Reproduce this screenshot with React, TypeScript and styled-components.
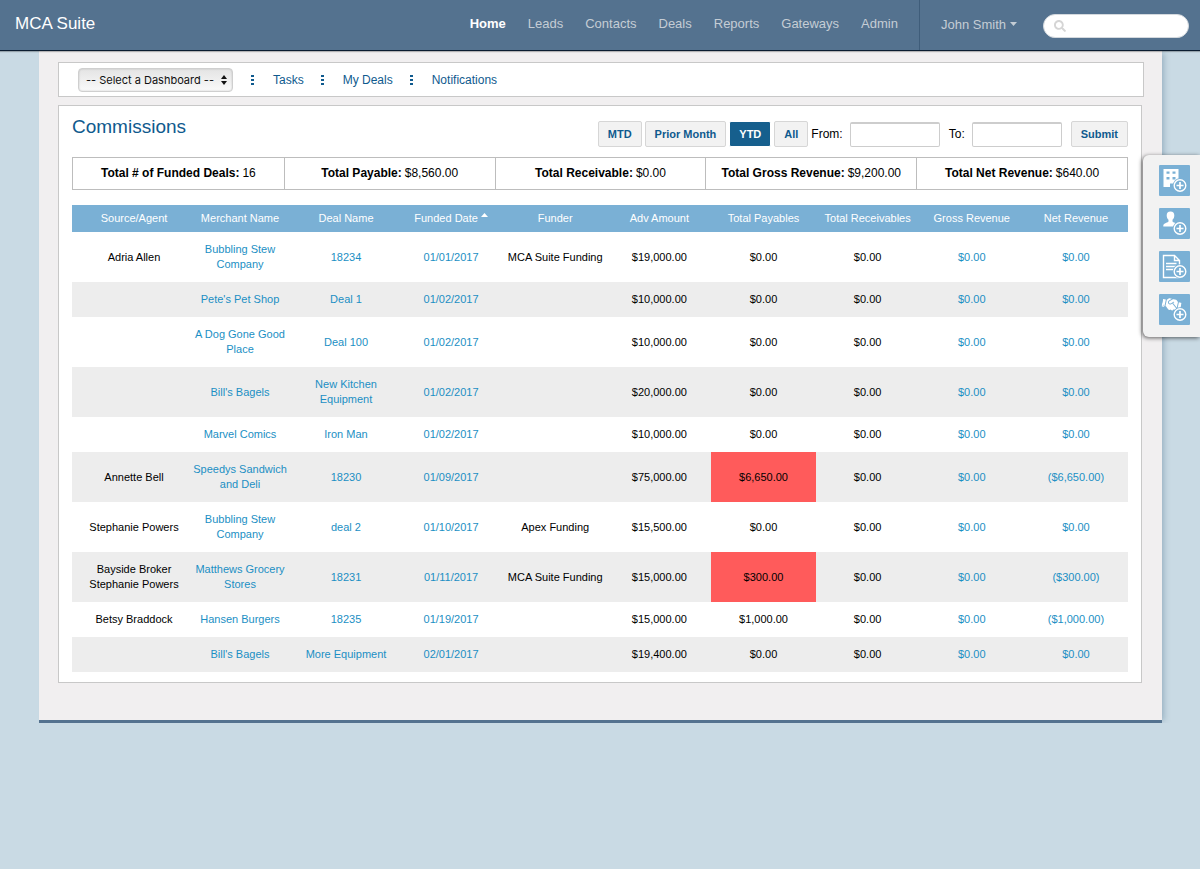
import React from "react";
import styled, { createGlobalStyle } from "styled-components";
import { FaHandshake, FaSearch } from "react-icons/fa";

const color = {
  bar: "#54728f",
  page: "#c9dae4",
  sheet: "#f1eff0",
  line: "#c8c8c8",
  heading: "#0f5a8e",
  link: "#1b8fc4",
  head: "#7ab0d5",
  stripe: "#ededed",
  alert: "#ff5b5b",
};

const GlobalStyle = createGlobalStyle`
  * { box-sizing: border-box; }
  body {
    margin: 0;
    background: ${color.page};
    color: #000;
    font-family: "Liberation Sans", Arial, sans-serif;
    font-size: 12px;
  }
  a { text-decoration: none; }
  button, input, select { font-family: inherit; }
`;

const TopBar = styled.header`
  position: relative;
  display: flex;
  justify-content: space-between;
  height: 51px;
  background: ${color.bar};
  border-bottom: 1px solid #0b1d30;
  box-shadow: 0 1px 1px rgba(0, 0, 0, 0.25);
`;

const Brand = styled.a`
  padding: 14px 15px;
  color: #fff;
  font-size: 17px;
  line-height: 20px;
`;

const BarRight = styled.div`
  display: flex;
`;

const MainNav = styled.nav`
  display: flex;
  gap: 22px;
  padding: 14px 21px;
  border-right: 1px solid #3f5d7a;
`;

const NavLink = styled.a<{ $current?: boolean }>`
  color: ${(p) => (p.$current ? "#fff" : "#c5cdd5")};
  font-size: 13px;
  font-weight: ${(p) => (p.$current ? "bold" : "normal")};
  line-height: 20px;
`;

const UserButton = styled.button`
  display: flex;
  align-items: center;
  gap: 4px;
  height: 20px;
  margin: 14px 26px 0 21px;
  padding: 0;
  border: 0;
  background: none;
  color: #c5cdd5;
  font-size: 13px;
`;

const SearchBox = styled.label`
  display: flex;
  align-items: center;
  width: 146px;
  height: 24px;
  margin: 14px 11px 0 0;
  padding: 0 10px;
  gap: 4px;
  border: 1px solid #d4d9de;
  border-radius: 12px;
  background: #fff;
  color: #d5d5d5;
`;

const SearchInput = styled.input`
  flex: 1;
  min-width: 0;
  border: 0;
  outline: 0;
  background: none;
  font-size: 12px;
`;

const Sheet = styled.main`
  margin: 0 38px 0 39px;
  padding: 11px 18px 37px 19px;
  background: ${color.sheet};
  border-bottom: 3px solid ${color.bar};
  box-shadow: 4px 0 6px -2px rgba(60, 100, 130, 0.35);
`;

const Toolbar = styled.nav`
  display: flex;
  align-items: center;
  height: 35px;
  margin-bottom: 8px;
  padding-left: 19px;
  border: 1px solid ${color.line};
  background: #fff;
`;

const SelectWrap = styled.div`
  position: relative;
  width: 155px;
  margin-right: 18px;
  svg {
    position: absolute;
    right: 6px;
    top: 7px;
    pointer-events: none;
  }
`;

const DashboardSelect = styled.select`
  appearance: none;
  display: block;
  width: 100%;
  height: 24px;
  padding: 0 7px;
  border: 1px solid #cfcfcf;
  border-radius: 4px;
  background: linear-gradient(#e4e4e4, #fafafa);
  box-shadow: inset 0 0 2px rgba(0, 0, 0, 0.2);
  color: #111;
  font-family: Inter, sans-serif;
  font-size: 11px;
`;

const ToolLink = styled.a`
  margin: 0 17px 0 18px;
  color: ${color.heading};
  line-height: 16px;
`;

const Card = styled.section`
  margin-right: 2px;
  padding: 15px 13px 10px;
  border: 1px solid ${color.line};
  background: #fff;
`;

const CardHead = styled.div`
  display: flex;
  justify-content: space-between;
  margin-bottom: 10px;
`;

const Title = styled.h1`
  margin: 0;
  color: ${color.heading};
  font-size: 19px;
  font-weight: normal;
  line-height: 12px;
`;

const Filters = styled.form`
  display: flex;
  align-items: center;
  gap: 3px;
`;

const FilterButton = styled.button<{ $active?: boolean }>`
  height: 26px;
  padding: 0 9px;
  border: 1px solid ${(p) => (p.$active ? "#fff" : "#d6d6d6")};
  border-radius: 2px;
  background: ${(p) => (p.$active ? "#165f8d" : "#f2f2f2")};
  color: ${(p) => (p.$active ? "#fff" : color.heading)};
  font-size: 11px;
  font-weight: bold;
`;

const DateField = styled.label`
  display: flex;
  align-items: center;
  gap: 7px;
  margin-right: 6px;
`;

const DateInput = styled.input`
  width: 90px;
  height: 25px;
  border: 1px solid #cdcdcd;
  border-top: 2px solid #cdcdcd;
  border-radius: 2px;
  background: #fff;
  font-size: 12px;
`;

const Totals = styled.dl`
  display: grid;
  grid-template-columns: repeat(5, 1fr);
  margin: 0 0 15px;
  border: 1px solid #bdbdbd;
`;

const Total = styled.div`
  display: flex;
  justify-content: center;
  gap: 3px;
  padding: 8px 0;
  line-height: 15px;
  & + & {
    border-left: 1px solid #bdbdbd;
  }
  dt {
    font-weight: bold;
  }
  dd {
    margin: 0;
  }
`;

const Grid = styled.table`
  width: 100%;
  table-layout: fixed;
  border-collapse: collapse;
  font-size: 11px;
  line-height: 15px;
  text-align: center;
`;

const Col = styled.col<{ $width?: number }>`
  width: ${(p) => (p.$width ? `${p.$width}px` : "auto")};
`;

const HeadCell = styled.th`
  padding: 6px 2px;
  background: ${color.head};
  color: #fff;
  font-weight: normal;
  white-space: nowrap;
  &:first-child {
    padding-left: 11px;
  }
  svg {
    margin-left: 3px;
    vertical-align: 5px;
  }
`;

const Row = styled.tr`
  &:nth-child(even) {
    background: ${color.stripe};
  }
`;

const Cell = styled.td<{ $alert?: boolean }>`
  padding: 10px 3px;
  background: ${(p) => (p.$alert ? color.alert : "transparent")};
  white-space: pre-line;
  &:first-child {
    padding-left: 12px;
  }
  a {
    color: ${color.link};
  }
`;

const QuickPanel = styled.aside`
  position: fixed;
  right: 0;
  top: 155px;
  display: grid;
  gap: 12px;
  padding: 10px 10px 12px 16px;
  border-radius: 6px 0 0 6px;
  background: #f2f2f2;
  box-shadow: -1px 1px 4px rgba(0, 0, 0, 0.6);
`;

const QuickButton = styled.button`
  display: block;
  width: 31px;
  height: 31px;
  padding: 0;
  border: 0;
  border-radius: 1px;
  background: ${color.head};
  color: #fff;
  svg {
    display: block;
  }
`;

const QuickIcon = ({ children }: { children: React.ReactNode }) => (
  <svg width="31" height="31" viewBox="0 0 31 31" fill="#fff" aria-hidden="true">
    {children}
    <circle cx="21" cy="20.5" r="7.2" fill={color.head} />
    <circle cx="21" cy="20.5" r="5.8" fill="none" stroke="#fff" strokeWidth="1.4" />
    <path d="M21 17v7M17.500 20.500h7" stroke="#fff" strokeWidth="1.700" fill="none" />
  </svg>
);

const Dots = () => (
  <svg width="4" height="10" viewBox="0 0 4 10" fill={color.heading} aria-hidden="true">
    <path d="M0 0h3v2H0zM0 4h3v2H0zM0 8h3v2H0z" />
  </svg>
);

const navItems = ["Home", "Leads", "Contacts", "Deals", "Reports", "Gateways", "Admin"];
const toolItems = ["Tasks", "My Deals", "Notifications"];

const totals = [
  ["Total # of Funded Deals:", "16"],
  ["Total Payable:", "$8,560.00"],
  ["Total Receivable:", "$0.00"],
  ["Total Gross Revenue:", "$9,200.00"],
  ["Total Net Revenue:", "$640.00"],
];

const columns = [
  "Source/Agent",
  "Merchant Name",
  "Deal Name",
  "Funded Date",
  "Funder",
  "Adv Amount",
  "Total Payables",
  "Total Receivables",
  "Gross Revenue",
  "Net Revenue",
];

interface Deal {
  agent: string;
  merchant: string;
  name: string;
  date: string;
  funder: string;
  amount: string;
  payable: string;
  net: string;
  alert?: boolean;
}

const deal = (
  agent: string,
  merchant: string,
  name: string,
  date: string,
  funder: string,
  amount: string,
  payable = "$0.00",
  net = "$0.00",
  alert = false
): Deal => ({ agent, merchant, name, date, funder, amount, payable, net, alert });

const deals: Deal[] = [
  deal("Adria Allen", "Bubbling Stew Company", "18234", "01/01/2017", "MCA Suite Funding", "$19,000.00"),
  deal("", "Pete's Pet Shop", "Deal 1", "01/02/2017", "", "$10,000.00"),
  deal("", "A Dog Gone Good Place", "Deal 100", "01/02/2017", "", "$10,000.00"),
  deal("", "Bill's Bagels", "New Kitchen Equipment", "01/02/2017", "", "$20,000.00"),
  deal("", "Marvel Comics", "Iron Man", "01/02/2017", "", "$10,000.00"),
  deal("Annette Bell", "Speedys Sandwich and Deli", "18230", "01/09/2017", "", "$75,000.00", "$6,650.00", "($6,650.00)", true),
  deal("Stephanie Powers", "Bubbling Stew Company", "deal 2", "01/10/2017", "Apex Funding", "$15,500.00"),
  deal("Bayside Broker\nStephanie Powers", "Matthews Grocery Stores", "18231", "01/11/2017", "MCA Suite Funding", "$15,000.00", "$300.00", "($300.00)", true),
  deal("Betsy Braddock", "Hansen Burgers", "18235", "01/19/2017", "", "$15,000.00", "$1,000.00", "($1,000.00)"),
  deal("", "Bill's Bagels", "More Equipment", "02/01/2017", "", "$19,400.00"),
];

const LinkCell = ({ text }: { text: string }) => (
  <Cell>
    <a href="#deal">{text}</a>
  </Cell>
);

export default function App() {
  return (
    <>
      <GlobalStyle />
      <TopBar>
        <Brand href="#home">MCA Suite</Brand>
        <BarRight>
          <MainNav aria-label="Main">
            {navItems.map((item, i) => (
              <NavLink key={item} href={`#${item}`} $current={i === 0}>
                {item}
              </NavLink>
            ))}
          </MainNav>
          <UserButton type="button">
            John Smith
            <svg width="7" height="4" viewBox="0 0 7 4" fill="currentColor" aria-hidden="true">
              <path d="M0 0h7L3.500 4z" />
            </svg>
          </UserButton>
          <SearchBox>
            <FaSearch size={12} aria-hidden="true" />
            <SearchInput type="search" aria-label="Search" />
          </SearchBox>
        </BarRight>
      </TopBar>

      <Sheet>
        <Toolbar aria-label="Dashboard">
          <SelectWrap>
            <DashboardSelect aria-label="Dashboard">
              <option>-- Select a Dashboard --</option>
            </DashboardSelect>
            <svg width="6" height="10" viewBox="0 0 6 10" fill="#111" aria-hidden="true">
              <path d="M0 4L3 0l3 4zM0 6l3 4 3-4z" />
            </svg>
          </SelectWrap>
          {toolItems.map((item) => (
            <React.Fragment key={item}>
              <Dots />
              <ToolLink href={`#${item}`}>{item}</ToolLink>
            </React.Fragment>
          ))}
        </Toolbar>

        <Card>
          <CardHead>
            <Title>Commissions</Title>
            <Filters onSubmit={(e) => e.preventDefault()}>
              <FilterButton type="button">MTD</FilterButton>
              <FilterButton type="button">Prior Month</FilterButton>
              <FilterButton type="button" $active>
                YTD
              </FilterButton>
              <FilterButton type="button">All</FilterButton>
              <DateField>
                From: <DateInput type="text" />
              </DateField>
              <DateField>
                To: <DateInput type="text" />
              </DateField>
              <FilterButton type="submit">Submit</FilterButton>
            </Filters>
          </CardHead>

          <Totals>
            {totals.map(([label, value]) => (
              <Total key={label}>
                <dt>{label}</dt>
                <dd>{value}</dd>
              </Total>
            ))}
          </Totals>

          <Grid>
            <colgroup>
              <Col $width={115} />
              <Col $width={106} />
              <Col $width={106} />
              {columns.slice(3).map((c) => (
                <Col key={c} />
              ))}
            </colgroup>
            <thead>
              <tr>
                {columns.map((c) => (
                  <HeadCell key={c} scope="col">
                    {c}
                    {c === "Funded Date" && (
                      <svg width="7" height="4" viewBox="0 0 7 4" fill="#fff" aria-hidden="true">
                        <path d="M0 4h7L3.500 0z" />
                      </svg>
                    )}
                  </HeadCell>
                ))}
              </tr>
            </thead>
            <tbody>
              {deals.map((d, i) => (
                <Row key={i}>
                  <Cell>{d.agent}</Cell>
                  <LinkCell text={d.merchant} />
                  <LinkCell text={d.name} />
                  <LinkCell text={d.date} />
                  <Cell>{d.funder}</Cell>
                  <Cell>{d.amount}</Cell>
                  <Cell $alert={d.alert}>{d.payable}</Cell>
                  <Cell>$0.00</Cell>
                  <LinkCell text="$0.00" />
                  <LinkCell text={d.net} />
                </Row>
              ))}
            </tbody>
          </Grid>
        </Card>
      </Sheet>

      <QuickPanel aria-label="Quick add">
        <QuickButton type="button" aria-label="Add company">
          <QuickIcon>
            <path
              fillRule="evenodd"
              d="M4.500 4h15v18H14v-3.500h-3V22H4.500zM7.500 6.500v2.200h3V6.500zM13.500 6.500v2.200h3V6.500zM7.500 12v2.500h3V12zM13.500 12v2.500h3V12z"
            />
          </QuickIcon>
        </QuickButton>
        <QuickButton type="button" aria-label="Add contact">
          <QuickIcon>
            <path d="M11.500 3.500c2.600 0 3.800 1.600 3.800 4 0 1.800-.7 3.300-1.800 4.200v1.800c0 .9 5.500 1.700 5.500 4v1H4.300v-1c0-2.300 5.200-3.100 5.200-4v-1.800c-1.100-.9-1.800-2.400-1.800-4.200 0-2.400 1.200-4 3.800-4z" />
          </QuickIcon>
        </QuickButton>
        <QuickButton type="button" aria-label="Add document">
          <QuickIcon>
            <path
              d="M4.500 4.500h11l5 5V26.500h-16zM15.500 4.500v5h5M7 12.500h10.500M7 15.500h10M7 18.500h8"
              fill="none"
              stroke="#fff"
              strokeWidth="1.400"
            />
          </QuickIcon>
        </QuickButton>
        <QuickButton type="button" aria-label="Add deal">
          <QuickIcon>
            <g transform="rotate(12 12 11)">
              <FaHandshake x={3} y={1} size={19} />
            </g>
          </QuickIcon>
        </QuickButton>
      </QuickPanel>
    </>
  );
}
